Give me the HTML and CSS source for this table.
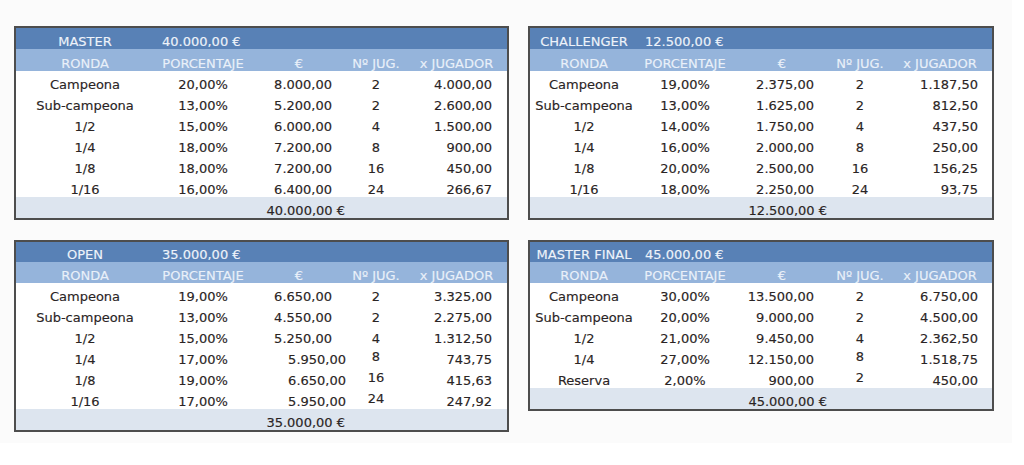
FILE: index.html
```html
<!DOCTYPE html>
<html lang="es">
<head>
<meta charset="utf-8">
<title>Premios</title>
<link rel="stylesheet" href="styles.css">
</head>
<body>
<div class="sheet">
  <div class="grid">
    <table class="prize wide">
      <colgroup><col class="c1"><col class="c2"><col class="c3"><col class="c4"><col class="c5"></colgroup>
      <tr class="title"><td class="ctr">MASTER</td><td class="amt">40.000,00 €</td><td></td><td></td><td></td></tr>
      <tr class="head"><td>RONDA</td><td>PORCENTAJE</td><td>€</td><td>Nº JUG.</td><td>x JUGADOR</td></tr>
      <tr><td class="ctr">Campeona</td><td class="ctr">20,00%</td><td class="eur">8.000,00</td><td class="ctr">2</td><td class="per">4.000,00</td></tr>
      <tr><td class="ctr">Sub-campeona</td><td class="ctr">13,00%</td><td class="eur">5.200,00</td><td class="ctr">2</td><td class="per">2.600,00</td></tr>
      <tr><td class="ctr">1/2</td><td class="ctr">15,00%</td><td class="eur">6.000,00</td><td class="ctr">4</td><td class="per">1.500,00</td></tr>
      <tr><td class="ctr">1/4</td><td class="ctr">18,00%</td><td class="eur">7.200,00</td><td class="ctr">8</td><td class="per">900,00</td></tr>
      <tr><td class="ctr">1/8</td><td class="ctr">18,00%</td><td class="eur">7.200,00</td><td class="ctr">16</td><td class="per">450,00</td></tr>
      <tr><td class="ctr">1/16</td><td class="ctr">16,00%</td><td class="eur">6.400,00</td><td class="ctr">24</td><td class="per">266,67</td></tr>
      <tr class="foot"><td></td><td></td><td class="tot">40.000,00 €</td><td></td><td></td></tr>
    </table>

    <table class="prize narrow">
      <colgroup><col class="c1"><col class="c2"><col class="c3"><col class="c4"><col class="c5"></colgroup>
      <tr class="title"><td class="ctr">CHALLENGER</td><td class="amt">12.500,00 €</td><td></td><td></td><td></td></tr>
      <tr class="head"><td>RONDA</td><td>PORCENTAJE</td><td>€</td><td>Nº JUG.</td><td>x JUGADOR</td></tr>
      <tr><td class="ctr">Campeona</td><td class="ctr">19,00%</td><td class="eur">2.375,00</td><td class="ctr">2</td><td class="per">1.187,50</td></tr>
      <tr><td class="ctr">Sub-campeona</td><td class="ctr">13,00%</td><td class="eur">1.625,00</td><td class="ctr">2</td><td class="per">812,50</td></tr>
      <tr><td class="ctr">1/2</td><td class="ctr">14,00%</td><td class="eur">1.750,00</td><td class="ctr">4</td><td class="per">437,50</td></tr>
      <tr><td class="ctr">1/4</td><td class="ctr">16,00%</td><td class="eur">2.000,00</td><td class="ctr">8</td><td class="per">250,00</td></tr>
      <tr><td class="ctr">1/8</td><td class="ctr">20,00%</td><td class="eur">2.500,00</td><td class="ctr">16</td><td class="per">156,25</td></tr>
      <tr><td class="ctr">1/16</td><td class="ctr">18,00%</td><td class="eur">2.250,00</td><td class="ctr">24</td><td class="per">93,75</td></tr>
      <tr class="foot"><td></td><td></td><td class="tot">12.500,00 €</td><td></td><td></td></tr>
    </table>

    <table class="prize wide low">
      <colgroup><col class="c1"><col class="c2"><col class="c3"><col class="c4"><col class="c5"></colgroup>
      <tr class="title"><td class="ctr">OPEN</td><td class="amt">35.000,00 €</td><td></td><td></td><td></td></tr>
      <tr class="head"><td>RONDA</td><td>PORCENTAJE</td><td>€</td><td>Nº JUG.</td><td>x JUGADOR</td></tr>
      <tr><td class="ctr">Campeona</td><td class="ctr">19,00%</td><td class="eur">6.650,00</td><td class="ctr">2</td><td class="per">3.325,00</td></tr>
      <tr><td class="ctr">Sub-campeona</td><td class="ctr">13,00%</td><td class="eur">4.550,00</td><td class="ctr">2</td><td class="per">2.275,00</td></tr>
      <tr><td class="ctr">1/2</td><td class="ctr">15,00%</td><td class="eur">5.250,00</td><td class="ctr">4</td><td class="per">1.312,50</td></tr>
      <tr><td class="ctr">1/4</td><td class="ctr">17,00%</td><td class="eur flush">5.950,00</td><td class="ctr up">8</td><td class="per">743,75</td></tr>
      <tr><td class="ctr">1/8</td><td class="ctr">19,00%</td><td class="eur flush">6.650,00</td><td class="ctr up">16</td><td class="per">415,63</td></tr>
      <tr><td class="ctr">1/16</td><td class="ctr">17,00%</td><td class="eur flush">5.950,00</td><td class="ctr up">24</td><td class="per">247,92</td></tr>
      <tr class="foot"><td></td><td></td><td class="tot">35.000,00 €</td><td></td><td></td></tr>
    </table>

    <table class="prize narrow low">
      <colgroup><col class="c1"><col class="c2"><col class="c3"><col class="c4"><col class="c5"></colgroup>
      <tr class="title"><td class="ctr">MASTER FINAL</td><td class="amt">45.000,00 €</td><td></td><td></td><td></td></tr>
      <tr class="head"><td>RONDA</td><td>PORCENTAJE</td><td>€</td><td>Nº JUG.</td><td>x JUGADOR</td></tr>
      <tr><td class="ctr">Campeona</td><td class="ctr">30,00%</td><td class="eur">13.500,00</td><td class="ctr">2</td><td class="per">6.750,00</td></tr>
      <tr><td class="ctr">Sub-campeona</td><td class="ctr">20,00%</td><td class="eur">9.000,00</td><td class="ctr">2</td><td class="per">4.500,00</td></tr>
      <tr><td class="ctr">1/2</td><td class="ctr">21,00%</td><td class="eur">9.450,00</td><td class="ctr">4</td><td class="per">2.362,50</td></tr>
      <tr><td class="ctr">1/4</td><td class="ctr">27,00%</td><td class="eur">12.150,00</td><td class="ctr up">8</td><td class="per">1.518,75</td></tr>
      <tr><td class="ctr">Reserva</td><td class="ctr">2,00%</td><td class="eur">900,00</td><td class="ctr up">2</td><td class="per">450,00</td></tr>
      <tr class="foot"><td></td><td></td><td class="tot">45.000,00 €</td><td></td><td></td></tr>
    </table>
  </div>
</div>
</body>
</html>
```

FILE: styles.css
```css
html, body {
  margin: 0;
  padding: 0;
  background: #ffffff;
}

.sheet {
  width: 1012px;
  height: 443px;
  box-sizing: border-box;
  padding: 26px 0 0 14px;
  background: #fbfbfb;
}

.grid {
  display: grid;
  grid-template-columns: 495px 466px;
  column-gap: 19px;
  row-gap: 20px;
  align-items: start;
}

.prize {
  border-collapse: separate;
  border-spacing: 0;
  table-layout: fixed;
  border: 2px solid #4d4d4d;
  background: #ffffff;
  font-family: "DejaVu Sans", Verdana, sans-serif;
  font-size: 13px;
  color: #2a2424;
  -webkit-text-stroke: 0.15px currentColor;
}

.prize.wide { width: 495px; }
.prize.narrow { width: 466px; }

.wide .c1 { width: 138px; }
.wide .c2 { width: 98px; }
.wide .c3 { width: 94px; }
.wide .c4 { width: 60px; }
.wide .c5 { width: 101px; }

.narrow .c1 { width: 108px; }
.narrow .c2 { width: 94px; }
.narrow .c3 { width: 100px; }
.narrow .c4 { width: 56px; }
.narrow .c5 { width: 104px; }

.prize td {
  height: 21px;
  padding: 0;
  line-height: 15px;
  vertical-align: bottom;
  white-space: nowrap;
  overflow: visible;
}

.prize .title td {
  background: #5881b6;
  color: #eef3fa;
  height: 21px;
}

.prize .head td {
  background: #95b4db;
  color: #e9f0f9;
  text-align: center;
  height: 22px;
}

.prize .foot td {
  background: #dde5ef;
  height: 21px;
}

.prize.low .title td { height: 20px; }
.prize.low .head td { height: 21px; }

.ctr { text-align: center; }

.amt {
  text-align: left;
  padding-left: 8px !important;
}

.eur, .per, .tot { text-align: right; }

.wide .eur { padding-right: 14px !important; }
.wide .eur.flush { padding-right: 0 !important; }
.wide .per { padding-right: 15px !important; }
.wide .tot { padding-right: 1px !important; }

.narrow .eur { padding-right: 18px !important; }
.narrow .per { padding-right: 14px !important; }
.narrow .tot { padding-right: 5px !important; }
.narrow .amt { padding-left: 7px !important; }

.prize td.up {
  vertical-align: middle;
}
```
